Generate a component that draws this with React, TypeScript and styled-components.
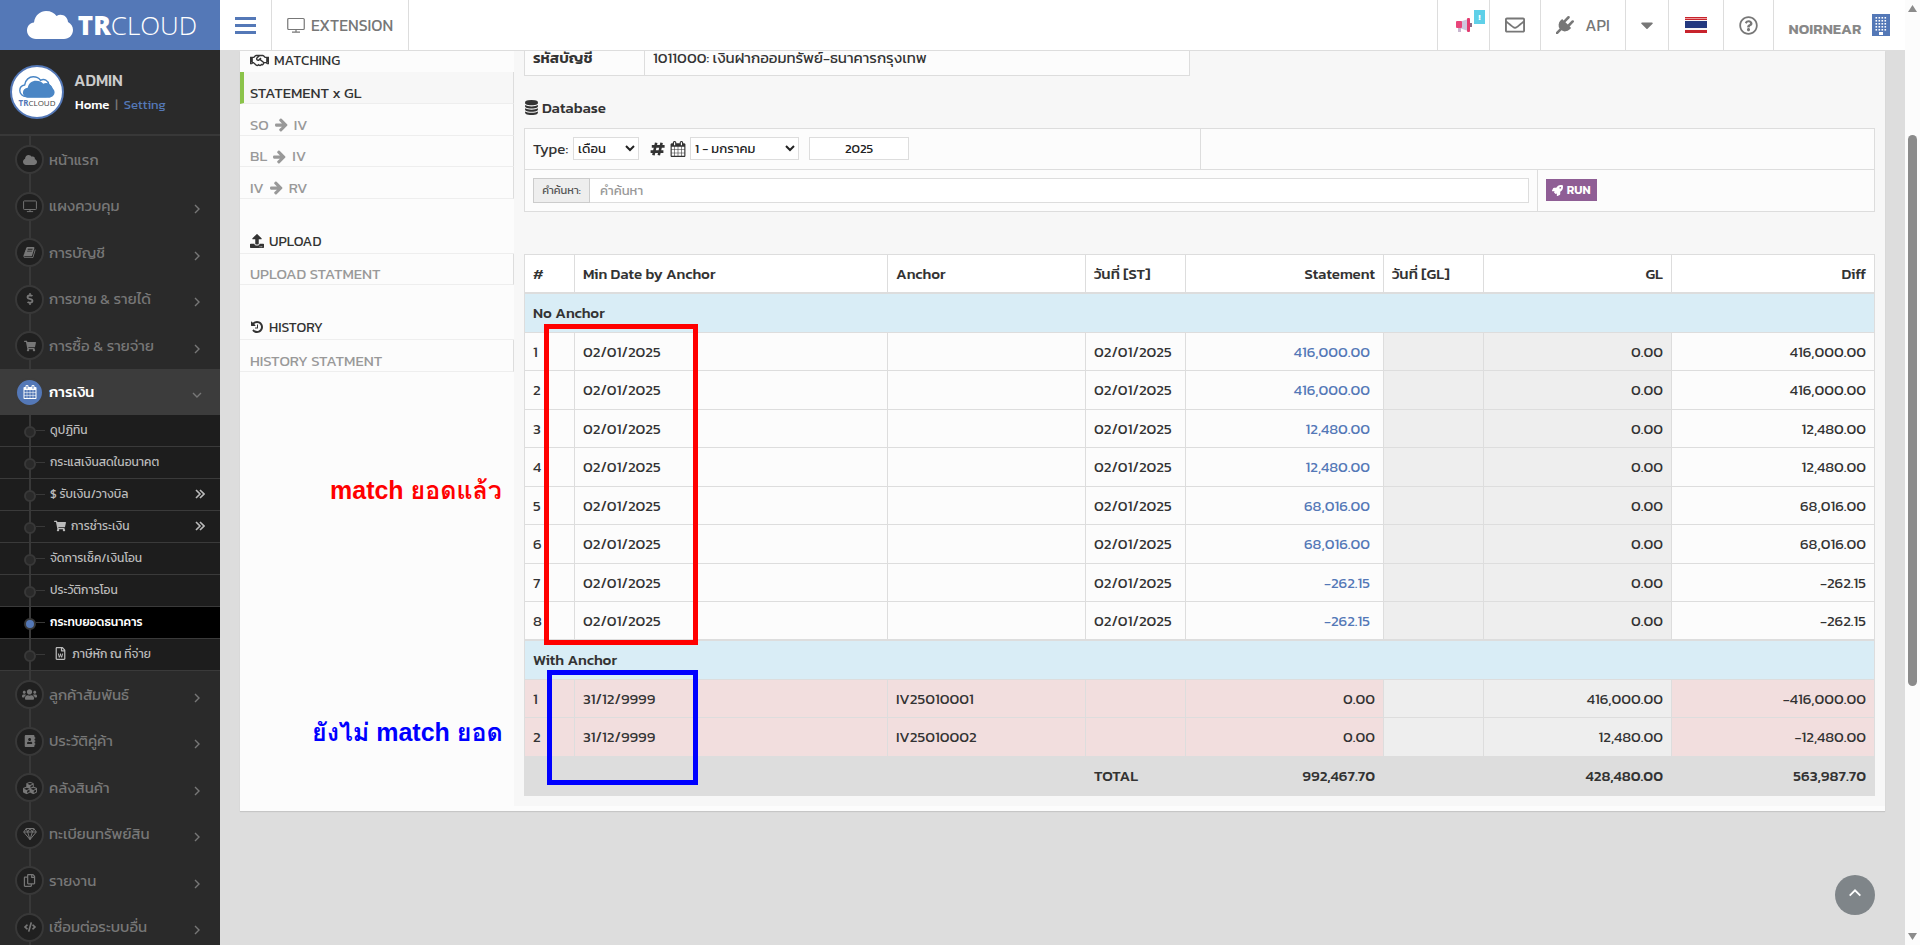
import React from 'react';
import styled, { createGlobalStyle, css } from 'styled-components';
import {
  FaAddressBook,
  FaCaretDown,
  FaCloud,
  FaCode,
  FaCubes,
  FaDollarSign,
  FaRegCopy,
  FaRegEnvelope,
  FaRegFileWord,
  FaRegHandshake,
  FaRegQuestionCircle,
  FaRocket,
  FaShoppingCart,
  FaUpload,
  FaUsers,
} from 'react-icons/fa';

const colors = {
  brand: '#5478b7',
  line: '#dddddd',
  text: '#333333',
  muted: '#999999',
  side: '#2a2a2a',
  sideLine: '#383838',
};

const GlobalStyle = createGlobalStyle`
  * { box-sizing: border-box; }
  body {
    margin: 0;
    font-family: Kanit, "Noto Sans", "Open Sans", "Noto Sans Thai", sans-serif;
    font-size: 14px;
    line-height: 20px;
    color: ${colors.text};
  }
  a { color: inherit; text-decoration: none; }
  button, input, select { font-family: inherit; }
  ul { list-style: none; margin: 0; padding: 0; }
  svg { display: block; flex: none; }
`;

/* ---------- glyphs ---------- */

const glyphs = {
  calendar:
    'M192 1664h288v-288h-288v288zm352 0h320v-288h-320v288zm-352-352h288v-320h-288v320zm352 0h320v-320h-320v320zm-352-384h288v-288h-288v288zm736 736h320v-288h-320v288zm-384-736h320v-288h-320v288zm768 736h288v-288h-288v288zm-384-352h320v-320h-320v320zm-352-864v-288q0-13-9.5-22.5t-22.5-9.5h-64q-13 0-22.5 9.5t-9.5 22.5v288q0 13 9.5 22.5t22.5 9.5h64q13 0 22.5-9.5t9.5-22.5zm736 864h288v-320h-288v320zm-384-384h320v-288h-320v288zm384 0h288v-288h-288v288zm32-480v-288q0-13-9.5-22.5t-22.5-9.5h-64q-13 0-22.5 9.5t-9.5 22.5v288q0 13 9.5 22.5t22.5 9.5h64q13 0 22.5-9.5t9.5-22.5zm384-64v1280q0 52-38 90t-90 38h-1408q-52 0-90-38t-38-90v-1280q0-52 38-90t90-38h128v-96q0-66 47-113t113-47h64q66 0 113 47t47 113v96h384v-96q0-66 47-113t113-47h64q66 0 113 47t47 113v96h128q52 0 90 38t38 90z',
  database:
    'M896 768q237 0 443-43t325-127v170q0 69-103 128t-280 93.5-385 34.5-385-34.5-280-93.5-103-128v-170q119 84 325 127t443 43zm0 768q237 0 443-43t325-127v170q0 69-103 128t-280 93.5-385 34.5-385-34.5-280-93.5-103-128v-170q119 84 325 127t443 43zm0-384q237 0 443-43t325-127v170q0 69-103 128t-280 93.5-385 34.5-385-34.5-280-93.5-103-128v-170q119 84 325 127t443 43zm0-1152q208 0 385 34.5t280 93.5 103 128v128q0 69-103 128t-280 93.5-385 34.5-385-34.5-280-93.5-103-128v-128q0-69 103-128t280-93.5 385-34.5z',
  plug: 'M1755 453q37 38 37 90.5t-37 90.5l-401 400 150 150-160 160q-163 163-389.5 186.5t-411.5-100.5l-362 362h-181v-181l362-362q-124-185-100.5-411.5t186.5-389.5l160-160 150 150 400-401q38-37 91-37t90 37 37 90.5-37 90.5l-400 401 234 234 401-400q38-37 91-37t90 37z',
  arrow:
    'M1600 960q0 54-37 91l-651 651q-39 37-91 37-51 0-90-37l-75-75q-38-38-38-91t38-91l293-293h-704q-52 0-84.5-37.5t-32.5-90.5v-128q0-53 32.5-90.5t84.5-37.5h704l-293-294q-38-36-38-90t38-90l75-75q38-38 90-38 53 0 91 38l651 651q37 35 37 90z',
  history:
    'M1664 896q0 156-61 298t-164 245-245 164-298 61q-172 0-327-72.5t-264-204.5q-7-10-6.5-22.5t8.5-20.5l137-138q10-9 25-9 16 2 23 12 73 95 179 147t225 52q104 0 198.5-40.5t163.5-109.5 109.5-163.5 40.5-198.5-40.5-198.5-109.5-163.5-163.5-109.5-198.5-40.5q-98 0-188 35.5t-160 101.5l137 138q31 30 14 69-17 40-59 40h-448q-26 0-45-19t-19-45v-448q0-42 40-59 39-17 69 14l130 129q107-101 244.5-156.5t284.5-55.5q156 0 298 61t245 164 164 245 61 298zm-640-288v448q0 14-9 23t-23 9h-320q-14 0-23-9t-9-23v-64q0-14 9-23t23-9h224v-352q0-14 9-23t23-9h64q14 0 23 9t9 23z',
  book: 'M1703 478q40 57 18 129l-275 906q-19 64-76.5 107.5t-122.5 43.5h-923q-77 0-148.5-53.5t-99.5-131.5q-24-67-2-127 0-4 3-27t4-37q1-8-3-21.5t-3-19.5q2-11 8-21t16.5-23.5 16.5-23.5q23-38 45-91.5t30-91.5q3-10 .5-30t-.5-28q3-11 17-28t17-23q21-36 42-92t25-90q1-9-2.5-32t.5-28q4-13 22-30.5t22-22.5q19-26 42.5-84.5t27.5-96.5q1-8-3-25.5t-2-26.5q2-8 9-18t18-23 17-21q8-12 16.5-30.5t15-35 16-36 19.5-32 26.5-23.5 36-11.5 47.5 5.5l-1 3q38-9 51-9h761q74 0 114 56t18 130l-274 906q-36 119-71.5 153.5t-128.5 34.5h-869q-27 0-38 15-11 16-1 43 24 70 144 70h923q29 0 56-15.5t35-41.5l300-987q7-22 5-57 38 15 59 43zm-1064 2q-4 13 2 22.5t20 9.5h608q13 0 25.5-9.5t16.5-22.5l21-64q4-13-2-22.5t-20-9.5h-608q-13 0-25.5 9.5t-16.5 22.5zm-83 256q-4 13 2 22.5t20 9.5h608q13 0 25.5-9.5t16.5-22.5l21-64q4-13-2-22.5t-20-9.5h-608q-13 0-25.5 9.5t-16.5 22.5z',
};

const Glyph = ({ name, size }: { name: keyof typeof glyphs; size: number }) => (
  <svg width={size} height={size} viewBox="0 0 1792 1792" fill="currentColor" aria-hidden>
    <path d={glyphs[name]} />
  </svg>
);

const HashMark = () => (
  <svg width="15" height="14" viewBox="0 0 15 14" fill="none" stroke="currentColor" strokeWidth="2.6" aria-hidden>
    <path d="M6.2.8 3.4 13.2M11.6.8 8.8 13.2M1.8 4.4h12.800M.6 9.6h12.800" />
  </svg>
);

const Screen = ({ size }: { size: number }) => (
  <svg width={size} height={size} viewBox="0 0 18 18" fill="none" stroke="currentColor" aria-hidden>
    <rect x="0.75" y="2.5" width="16.5" height="11" rx="1" strokeWidth="1.2" />
    <path d="M9 13.5v2.5M5 16.2h8" strokeWidth="1.2" />
  </svg>
);

const Diamond = () => (
  <svg width="14" height="14" viewBox="0 0 14 14" fill="none" stroke="currentColor" strokeLinejoin="round" aria-hidden>
    <path d="M3.2 1.5h7.6L13.3 5 7 12.6.7 5zM.7 5h12.6M3.2 1.5 4.6 5 7 12.6 9.4 5l1.4-3.5M4.6 5 7 1.5 9.4 5" />
  </svg>
);

const Chevron = ({ down, up, size = 12 }: { down?: boolean; up?: boolean; size?: number }) => (
  <svg width={size} height={size} viewBox="0 0 12 12" fill="none" stroke="currentColor" strokeWidth="1.4" aria-hidden>
    <path d={down ? 'M2 4l4 4 4-4' : up ? 'M2 8l4-4 4 4' : 'M4 2l4 4-4 4'} />
  </svg>
);

const DoubleChevron = () => (
  <svg width="10" height="10" viewBox="0 0 10 10" fill="none" stroke="currentColor" strokeWidth="1.6" aria-hidden>
    <path d="M1 1l4 4-4 4M5 1l4 4-4 4" />
  </svg>
);

const Building = () => (
  <svg width="18" height="22" viewBox="0 0 18 22" aria-hidden>
    <rect width="18" height="22" fill={colors.brand} />
    {[3, 6, 9, 12, 15].map((y) =>
      [3, 6, 9, 12].map((x) => <rect key={`${x}-${y}`} x={x + 0.5} y={y} width="1.6" height="1.6" fill="#fff" />),
    )}
    <rect x="7" y="18" width="4" height="3" fill="#fff" />
  </svg>
);

const Megaphone = () => (
  <svg width="16" height="16" viewBox="0 0 16 16" aria-hidden>
    <rect x="2" y="9" width="3" height="6" fill="#c9b6cf" />
    <path d="M5 4.5 12 2v12l-7-2.5z" fill="#cfc6dd" />
    <rect y="4" width="6" height="7" rx="1" fill="#e8457a" />
    <rect x="11" y="1" width="3" height="14" rx="1" fill="#e33b70" />
    <rect x="14" y="6" width="2" height="4" fill="#8d6b86" />
  </svg>
);

const ThaiFlag = () => (
  <svg width="22" height="16" viewBox="0 0 22 16" aria-hidden>
    <rect width="22" height="16" fill="#c8232c" />
    <rect y="1" width="22" height="1" fill="#ec9a9c" />
    <rect y="3" width="22" height="10" fill="#f6f6f6" />
    <rect y="4" width="22" height="7" fill="#22387f" />
  </svg>
);

const cloudPath =
  'M9 28C4 28 0 24 0 19.5 0 15 3 12 7 11.5 8 4 13.5 0 19 0c5 0 8.5 2 10.5 5 5-3 11 0 11.5 6 3 1.5 5 4.5 5 8 0 5-4 9-9 9z';

const Cloud = ({ width, fill }: { width: number; fill: string }) => (
  <svg width={width} height={Math.round((width * 28) / 46)} viewBox="0 0 46 28" aria-hidden>
    <path d={cloudPath} fill={fill} />
  </svg>
);

const AvatarCloud = () => (
  <svg width="36" height="22" viewBox="0 0 46 28" aria-hidden>
    <g transform="translate(1 1) scale(.9)">
      <path d={cloudPath} fill="#fff" stroke="#4a86c5" strokeWidth="2" />
    </g>
    <g transform="translate(5 6) scale(.88 .78)">
      <path d={cloudPath} fill="#4a86c5" />
    </g>
  </svg>
);

/* ---------- page frame ---------- */

const Page = styled.div`
  display: flex;
  height: 100vh;
  overflow: hidden;
`;

const Body = styled.div`
  flex: 1;
  min-width: 0;
  display: flex;
  flex-direction: column;
  background: ${colors.line};
`;

const ScrollTrack = styled.div`
  flex: none;
  width: 15px;
  background: #fcfcfc;
  color: #8b8b8b;
  display: flex;
  flex-direction: column;
  align-items: center;
  justify-content: space-between;
  padding: 5px 0;
`;

const ScrollBody = styled.div`
  flex: 1;
  padding-top: 123px;
`;

const ScrollThumb = styled.div`
  width: 9px;
  height: 69%;
  border-radius: 5px;
  background: currentColor;
`;

const Arrow = ({ down }: { down?: boolean }) => (
  <svg width="9" height="7" viewBox="0 0 9 7" fill="currentColor" aria-hidden>
    <path d={down ? 'M0 0h9L4.5 7z' : 'M0 7h9L4.5 0z'} />
  </svg>
);

/* ---------- sidebar ---------- */

const Sidebar = styled.aside`
  flex: none;
  width: 220px;
  overflow: hidden;
  background: ${colors.side};
`;

const Logo = styled.a`
  display: flex;
  align-items: center;
  justify-content: center;
  gap: 5px;
  height: 50px;
  padding-left: 4px;
  background: ${colors.brand};
  color: #fff;
  font-size: 26px;
  line-height: 28px;
  font-family: "Open Sans", sans-serif;
  font-weight: 300;
  b { font-weight: 800; }
`;

const Profile = styled.div`
  display: flex;
  gap: 10px;
  height: 86px;
  padding: 15px 10px;
  border-bottom: 2px solid ${colors.sideLine};
`;

const Avatar = styled.div`
  width: 54px;
  height: 54px;
  border: 2px solid ${colors.brand};
  border-radius: 50%;
  background: #fff;
  display: flex;
  flex-direction: column;
  align-items: center;
  justify-content: center;
  color: #444;
  font-size: 8px;
  line-height: 10px;
  font-family: "Open Sans", sans-serif;
  b { color: ${colors.brand}; }
`;

const ProfileText = styled.div`
  display: flex;
  flex-direction: column;
  gap: 5px;
  padding-top: 5px;
`;

const UserName = styled.strong`
  color: #ccc;
  font-size: 16px;
  font-weight: 500;
`;

const ProfileLinks = styled.div`
  display: flex;
  gap: 6px;
  padding-left: 1px;
  color: #777;
  font-size: 13px;
  a:first-child { color: #fff; font-weight: 500; }
  a:last-child { color: ${colors.brand}; }
`;

const MenuList = styled.ul`
  background: linear-gradient(${colors.sideLine}, ${colors.sideLine}) 29px 0 / 2px 100% no-repeat;
`;

const MenuLink = styled.a<{ $active?: boolean }>`
  display: flex;
  align-items: center;
  height: 47px;
  padding: 0 17px 0 15px;
  color: ${(p) => (p.$active ? '#fff' : '#777')};
  font-weight: ${(p) => (p.$active ? 500 : 400)};
  font-size: 15px;
  ${(p) => p.$active && 'background: #3c3c3c;'}
  li:nth-child(even) > & { height: 46px; }
  > span:nth-child(2) { flex: 1; }
  > svg { color: #777; margin-top: 6px; }
`;

const MenuIcon = styled.span<{ $active?: boolean }>`
  width: 29px;
  height: 29px;
  margin-right: 5px;
  border: 2px solid ${(p) => (p.$active ? '#3c3c3c' : colors.sideLine)};
  border-radius: 50%;
  background: ${(p) => (p.$active ? colors.brand : '#202020')};
  display: flex;
  align-items: center;
  justify-content: center;
`;

const SubList = styled.ul`
  background:
    linear-gradient(${colors.sideLine}, ${colors.sideLine}) 29px 0 / 2px 100% no-repeat,
    #1d1d1d;
`;

const SubLink = styled.a<{ $active?: boolean }>`
  display: flex;
  align-items: center;
  gap: 5px;
  height: 32px;
  padding: 0 15px 2px 24px;
  border-bottom: 1px solid #3a3a3a;
  color: ${(p) => (p.$active ? '#fff' : '#bbb')};
  font-weight: ${(p) => (p.$active ? 500 : 400)};
  font-size: 12px;
  ${(p) =>
    p.$active &&
    css`
      background: linear-gradient(${colors.sideLine}, ${colors.sideLine}) 29px 0 / 2px 100% no-repeat, #000;
    `}
  > span:last-of-type { flex: 1; }
`;

const Node = styled.i<{ $active?: boolean }>`
  width: 12px;
  height: 12px;
  margin-top: 5px;
  border: 2px solid ${colors.sideLine};
  border-radius: 50%;
  background: ${(p) => (p.$active ? colors.brand : '#2a2a2a')};
`;

const Tick = styled.i`
  width: 9px;
  height: 1px;
  margin: 2px 0 0 -5px;
  background: ${colors.sideLine};
`;

const SubIcon = styled.span`
  padding-left: 4px;
`;

const menuTop = [
  { label: 'หน้าแรก', icon: <FaCloud size={14} />, leaf: true },
  { label: 'แผงควบคุม', icon: <Screen size={14} /> },
  { label: 'การบัญชี', icon: <Glyph name="book" size={13} /> },
  { label: 'การขาย & รายได้', icon: <FaDollarSign size={12} /> },
  { label: 'การซื้อ & รายจ่าย', icon: <FaShoppingCart size={12} /> },
  { label: 'การเงิน', icon: <Glyph name="calendar" size={14} />, active: true },
];

const submenu = [
  { label: 'ดูปฏิทิน' },
  { label: 'กระแสเงินสดในอนาคต' },
  { label: '$ รับเงิน/วางบิล', more: true },
  { label: 'การชำระเงิน', icon: <FaShoppingCart size={12} />, more: true },
  { label: 'จัดการเช็ค/เงินโอน' },
  { label: 'ประวัติการโอน' },
  { label: 'กระทบยอดธนาคาร', active: true },
  { label: 'ภาษีหัก ณ ที่จ่าย', icon: <FaRegFileWord size={13} /> },
];

const menuBottom = [
  { label: 'ลูกค้าสัมพันธ์', icon: <FaUsers size={15} /> },
  { label: 'ประวัติคู่ค้า', icon: <FaAddressBook size={12} /> },
  { label: 'คลังสินค้า', icon: <FaCubes size={14} /> },
  { label: 'ทะเบียนทรัพย์สิน', icon: <Diamond /> },
  { label: 'รายงาน', icon: <FaRegCopy size={13} /> },
  { label: 'เชื่อมต่อระบบอื่น', icon: <FaCode size={12} /> },
];

type MenuEntry = { label: string; icon: React.ReactNode; leaf?: boolean; active?: boolean };

const Menu = ({ items }: { items: MenuEntry[] }) => (
  <MenuList>
    {items.map((m) => (
      <li key={m.label}>
        <MenuLink href="#" $active={m.active}>
          <MenuIcon $active={m.active}>{m.icon}</MenuIcon>
          <span>{m.label}</span>
          {!m.leaf && <Chevron down={m.active} />}
        </MenuLink>
      </li>
    ))}
  </MenuList>
);

/* ---------- top bar ---------- */

const TopBar = styled.header`
  flex: none;
  display: flex;
  height: 51px;
  background: #fff;
  border-bottom: 1px solid ${colors.line};
  color: #777;
`;

const TopButton = styled.button<{ $w: number; $side?: 'left' | 'right'; $gap?: number }>`
  position: relative;
  display: flex;
  align-items: center;
  justify-content: center;
  gap: ${(p) => p.$gap ?? 6}px;
  width: ${(p) => p.$w}px;
  padding: 0;
  border: 0;
  border-${(p) => p.$side ?? 'left'}: 1px solid ${colors.line};
  background: none;
  color: #777;
  font-size: 16px;
`;

const TopSpacer = styled.div`
  flex: 1;
`;

const Badge = styled.span`
  position: absolute;
  top: 10px;
  right: 4px;
  width: 11px;
  height: 14px;
  background: #5fd0e8;
  color: #fff;
  font-size: 8px;
  line-height: 14px;
  font-weight: 700;
`;

const Account = styled.strong`
  font-size: 15px;
  font-weight: 600;
  color: #888;
  padding-top: 6px;
`;

/* ---------- content ---------- */

const Content = styled.main`
  position: relative;
  flex: 1;
  padding: 0 20px;
`;

const Panel = styled.div`
  position: relative;
  display: flex;
  background: #fcfcfc;
  padding-bottom: 5px;
  box-shadow: 0 1px 1px rgba(0, 0, 0, 0.1);
`;

const SideNav = styled.nav`
  flex: none;
  width: 274px;
`;

const SideTitle = styled.h2<{ $first?: boolean }>`
  display: flex;
  align-items: ${(p) => (p.$first ? 'flex-start' : 'flex-end')};
  gap: 5px;
  height: ${(p) => (p.$first ? 21 : 55)}px;
  margin: 0;
  padding: 0 10px 1px;
  ${(p) => !p.$first && 'border-bottom: 1px solid #eee;'}
  font-size: 14px;
  font-weight: 400;
  svg { margin: ${(p) => (p.$first ? '0' : '0 0 4px')}; }
`;

const SideLink = styled.a<{ $active?: boolean }>`
  display: flex;
  align-items: center;
  gap: 5px;
  height: 32px;
  padding: 10px 10px 0 ${(p) => (p.$active ? 6 : 10)}px;
  border-bottom: 1px solid #eee;
  border-right: 1px solid ${colors.line};
  ${(p) => p.$active && 'border-left: 4px solid #8bc34a; background: #f7f7f7;'}
  color: ${(p) => (p.$active ? colors.text : colors.muted)};
  font-size: 15px;
  &:nth-of-type(2n + 3) { height: 31px; }
`;

const Work = styled.section`
  flex: 1;
  min-width: 0;
  padding: 0 10px 10px;
  background: #f7f7f7;
`;

const tableBase = css`
  border-collapse: collapse;
  table-layout: fixed;
  background: #fcfcfc;
  font-size: 15px;
`;

const InfoTable = styled.table`
  ${tableBase}
  width: 666px;
  th, td {
    height: 24px;
    padding: 0 8px;
    border: 1px solid ${colors.line};
    border-top: 0;
    text-align: left;
    vertical-align: top;
    line-height: 13px;
  }
  th { width: 120px; font-weight: 600; }
`;

const SectionTitle = styled.h3`
  display: flex;
  align-items: center;
  gap: 3px;
  height: 20px;
  margin: 22px 0 10px;
  font-size: 15px;
  font-weight: 500;
`;

const Filters = styled.div`
  border: 1px solid ${colors.line};
  background: #fcfcfc;
`;

const FilterRow = styled.form`
  display: flex;
  height: 40px;
  & + & {
    height: 42px;
    border-top: 1px solid ${colors.line};
  }
`;

const FilterCell = styled.div<{ $grow?: boolean; $w?: string }>`
  display: flex;
  align-items: center;
  padding: 0 8px;
  ${(p) => (p.$grow ? 'flex: 1;' : `width: ${p.$w};`)}
  & + & { border-left: 1px solid ${colors.line}; }
`;

const field = css`
  height: 23px;
  border: 1px solid ${colors.line};
  border-radius: 0;
  background: #fff;
  color: #222;
  font-size: 13px;
`;

const Select = styled.select<{ $w: number }>`
  ${field}
  width: ${(p) => p.$w}px;
`;

const MarkGroup = styled.span`
  display: flex;
  align-items: center;
  gap: 5px;
  margin: 0 4px 0 11px;
`;

const YearInput = styled.input`
  ${field}
  width: 100px;
  margin-left: 10px;
  text-align: center;
`;

const TypeLabel = styled.label`
  margin-right: 5px;
  font-size: 15px;
`;

const SearchLabel = styled.label`
  width: 57px;
  height: 25px;
  border: 1px solid #ccc;
  background: #eee;
  color: #555;
  font-size: 11px;
  line-height: 23px;
  text-align: center;
`;

const SearchInput = styled.input`
  ${field}
  flex: 1;
  height: 25px;
  border-left: 0;
  padding: 0 10px;
  &::placeholder { color: #999; }
`;

const RunButton = styled.button`
  display: flex;
  align-items: center;
  gap: 4px;
  height: 22px;
  padding: 0 6px;
  border: 0;
  background: #8f5e95;
  color: #fff;
  font-size: 12px;
  font-weight: 600;
`;

const DataTable = styled.table`
  ${tableBase}
  width: 100%;
  margin-top: 42px;
  th, td {
    padding: 1px 8px 0;
    border: 1px solid ${colors.line};
    text-align: left;
    font-weight: 400;
  }
  thead th {
    height: 39px;
    background: #fff;
    font-weight: 500;
    border-bottom-width: 2px;
  }
`;

const GroupRow = styled.tr`
  th[scope] {
    height: 39px;
    background: #d9edf6;
    font-weight: 500;
  }
  tbody + tbody & th { border-top-width: 2px; }
`;

const EntryRow = styled.tr<{ $alert?: boolean }>`
  height: 38px;
  background: ${(p) => (p.$alert ? '#f2dede' : '#fcfcfc')};
  &:nth-child(odd) { height: 39px; }
`;

const TotalRow = styled.tr`
  height: 39px;
  background: ${colors.line};
  && td { font-weight: 500; }
`;

const Num = styled.td<{ $gl?: boolean }>`
  && { text-align: right; }
  ${(p) => p.$gl && 'background: #eee;'}
  a { color: ${colors.brand}; padding-right: 5px; }
`;

const GlCell = styled.td`
  background: #eee;
`;

const NumHead = styled.th`
  && { text-align: right; }
`;

/* ---------- marks over the page ---------- */

const Frame = styled.div<{ $color: string; $x: number; $y: number; $w: number; $h: number }>`
  position: absolute;
  left: ${(p) => p.$x}px;
  top: ${(p) => p.$y}px;
  width: ${(p) => p.$w}px;
  height: ${(p) => p.$h}px;
  border: 5px solid ${(p) => p.$color};
`;

const Note = styled.div<{ $color: string; $x: number; $y: number }>`
  position: absolute;
  left: ${(p) => p.$x}px;
  top: ${(p) => p.$y}px;
  color: ${(p) => p.$color};
  font: 700 25px/32px "Liberation Sans", Loma, Garuda, "Noto Sans Thai Looped", sans-serif;
  white-space: nowrap;
`;

const ToTop = styled.button`
  position: absolute;
  right: 30px;
  bottom: 30px;
  width: 40px;
  height: 40px;
  padding: 0 0 4px;
  border: 0;
  border-radius: 50%;
  background: #7f8589;
  color: #fff;
  display: flex;
  align-items: center;
  justify-content: center;
`;

const open = ['416,000.00', '416,000.00', '12,480.00', '12,480.00', '68,016.00', '68,016.00', '-262.15', '-262.15'];

const anchored = [
  { anchor: 'IV25010001', gl: '416,000.00' },
  { anchor: 'IV25010002', gl: '12,480.00' },
];

const routes = [
  ['SO', 'IV'],
  ['BL', 'IV'],
  ['IV', 'RV'],
];

const Col = styled.col<{ $w?: number }>`
  ${(p) => p.$w && `width: ${p.$w}px;`}
`;

const DataGrid = () => (
  <DataTable>
    <colgroup>
      <Col $w={50} />
      <Col />
      <Col $w={198} />
      <Col $w={100} />
      <Col $w={198} />
      <Col $w={100} />
      <Col $w={188} />
      <Col $w={203} />
    </colgroup>
    <thead>
      <tr>
        <th>#</th>
        <th>Min Date by Anchor</th>
        <th>Anchor</th>
        <th>วันที่ [ST]</th>
        <NumHead>Statement</NumHead>
        <th>วันที่ [GL]</th>
        <NumHead>GL</NumHead>
        <NumHead>Diff</NumHead>
      </tr>
    </thead>
    <tbody>
      <GroupRow>
        <th scope="rowgroup" colSpan={8}>No Anchor</th>
      </GroupRow>
      {open.map((amount, i) => (
        <EntryRow key={i}>
          <td>{i + 1}</td>
          <td>02/01/2025</td>
          <td />
          <td>02/01/2025</td>
          <Num><a href="#">{amount}</a></Num>
          <GlCell />
          <Num $gl>0.00</Num>
          <Num>{amount}</Num>
        </EntryRow>
      ))}
    </tbody>
    <tbody>
      <GroupRow>
        <th scope="rowgroup" colSpan={8}>With Anchor</th>
      </GroupRow>
      {anchored.map((row, i) => (
        <EntryRow key={row.anchor} $alert>
          <td>{i + 1}</td>
          <td>31/12/9999</td>
          <td>{row.anchor}</td>
          <td />
          <Num>0.00</Num>
          <GlCell />
          <Num $gl>{row.gl}</Num>
          <Num>-{row.gl}</Num>
        </EntryRow>
      ))}
      <TotalRow>
        <td colSpan={3} />
        <td>TOTAL</td>
        <Num>992,467.70</Num>
        <td />
        <Num>428,480.00</Num>
        <Num>563,987.70</Num>
      </TotalRow>
    </tbody>
  </DataTable>
);

export default function App() {
  return (
    <Page>
      <GlobalStyle />
      <Sidebar>
        <Logo href="#">
          <Cloud width={46} fill="#fff" />
          <span><b>TR</b>CLOUD</span>
        </Logo>
        <Profile>
          <Avatar>
            <AvatarCloud />
            <span><b>TR</b>CLOUD</span>
          </Avatar>
          <ProfileText>
            <UserName>ADMIN</UserName>
            <ProfileLinks>
              <a href="#">Home</a>
              <span>|</span>
              <a href="#">Setting</a>
            </ProfileLinks>
          </ProfileText>
        </Profile>
        <Menu items={menuTop} />
        <SubList>
          {submenu.map((s) => (
            <li key={s.label}>
              <SubLink href="#" $active={s.active}>
                <Node $active={s.active} />
                <Tick />
                {s.icon && <SubIcon>{s.icon}</SubIcon>}
                <span>{s.label}</span>
                {s.more && <DoubleChevron />}
              </SubLink>
            </li>
          ))}
        </SubList>
        <Menu items={menuBottom} />
      </Sidebar>

      <Body>
        <TopBar>
          <TopButton $w={52} $side="right" aria-label="Menu">
            <svg width="21" height="17" viewBox="0 0 21 17" fill={colors.brand}>
              <path d="M0 0h21v3H0zM0 7h21v3H0zM0 14h21v3H0z" />
            </svg>
          </TopButton>
          <TopButton $w={137} $side="right">
            <Screen size={18} />
            EXTENSION
          </TopButton>
          <TopSpacer />
          <TopButton $w={52} aria-label="News">
            <Megaphone />
            <Badge>!</Badge>
          </TopButton>
          <TopButton $w={51} aria-label="Mail"><FaRegEnvelope size={20} /></TopButton>
          <TopButton $w={85} $gap={11}>
            <Glyph name="plug" size={18} />
            API
          </TopButton>
          <TopButton $w={43} aria-label="More"><FaCaretDown size={20} /></TopButton>
          <TopButton $w={55} aria-label="Language"><ThaiFlag /></TopButton>
          <TopButton $w={50} aria-label="Help"><FaRegQuestionCircle size={19} /></TopButton>
          <TopButton $w={132} $gap={11}>
            <Account>NOIRNEAR</Account>
            <Building />
          </TopButton>
        </TopBar>

        <Content>
          <Panel>
            <SideNav>
              <SideTitle $first><FaRegHandshake size={19} />MATCHING</SideTitle>
              <SideLink href="#" $active>STATEMENT x GL</SideLink>
              {routes.map(([from, to]) => (
                <SideLink href="#" key={from}>
                  {from} <Glyph name="arrow" size={15} /> {to}
                </SideLink>
              ))}
              <SideTitle><FaUpload size={14} />UPLOAD</SideTitle>
              <SideLink href="#">UPLOAD STATMENT</SideLink>
              <SideTitle><Glyph name="history" size={14} />HISTORY</SideTitle>
              <SideLink href="#">HISTORY STATMENT</SideLink>
            </SideNav>
            <Work>
              <InfoTable>
                <tbody>
                  <tr>
                    <th scope="row">รหัสบัญชี</th>
                    <td>1011000: เงินฝากออมทรัพย์-ธนาคารกรุงเทพ</td>
                  </tr>
                </tbody>
              </InfoTable>
              <SectionTitle><Glyph name="database" size={15} />Database</SectionTitle>
              <Filters>
                <FilterRow>
                  <FilterCell $w="50%">
                    <TypeLabel htmlFor="type">Type:</TypeLabel>
                    <Select id="type" $w={66}><option>เดือน</option></Select>
                    <MarkGroup>
                      <HashMark />
                      <Glyph name="calendar" size={16} />
                    </MarkGroup>
                    <Select $w={109} aria-label="Month"><option>1 - มกราคม</option></Select>
                    <YearInput defaultValue="2025" aria-label="Year" />
                  </FilterCell>
                  <FilterCell $grow />
                </FilterRow>
                <FilterRow>
                  <FilterCell $w="75%">
                    <SearchLabel htmlFor="search">คำค้นหา:</SearchLabel>
                    <SearchInput id="search" placeholder="คำค้นหา" />
                  </FilterCell>
                  <FilterCell $grow>
                    <RunButton type="button"><FaRocket size={11} />RUN</RunButton>
                  </FilterCell>
                </FilterRow>
              </Filters>
              <DataGrid />
            </Work>
            <Frame $color="#ff0000" $x={304} $y={273} $w={154} $h={321} />
            <Frame $color="#0000ff" $x={307} $y={619} $w={151} $h={115} />
            <Note $color="#ff0000" $x={90} $y={423}>match ยอดแล้ว</Note>
            <Note $color="#0000ff" $x={72} $y={665}>ยังไม่ match ยอด</Note>
          </Panel>
          <ToTop aria-label="Back to top"><Chevron up size={16} /></ToTop>
        </Content>
      </Body>

      <ScrollTrack aria-hidden>
        <Arrow />
        <ScrollBody><ScrollThumb /></ScrollBody>
        <Arrow down />
      </ScrollTrack>
    </Page>
  );
}
